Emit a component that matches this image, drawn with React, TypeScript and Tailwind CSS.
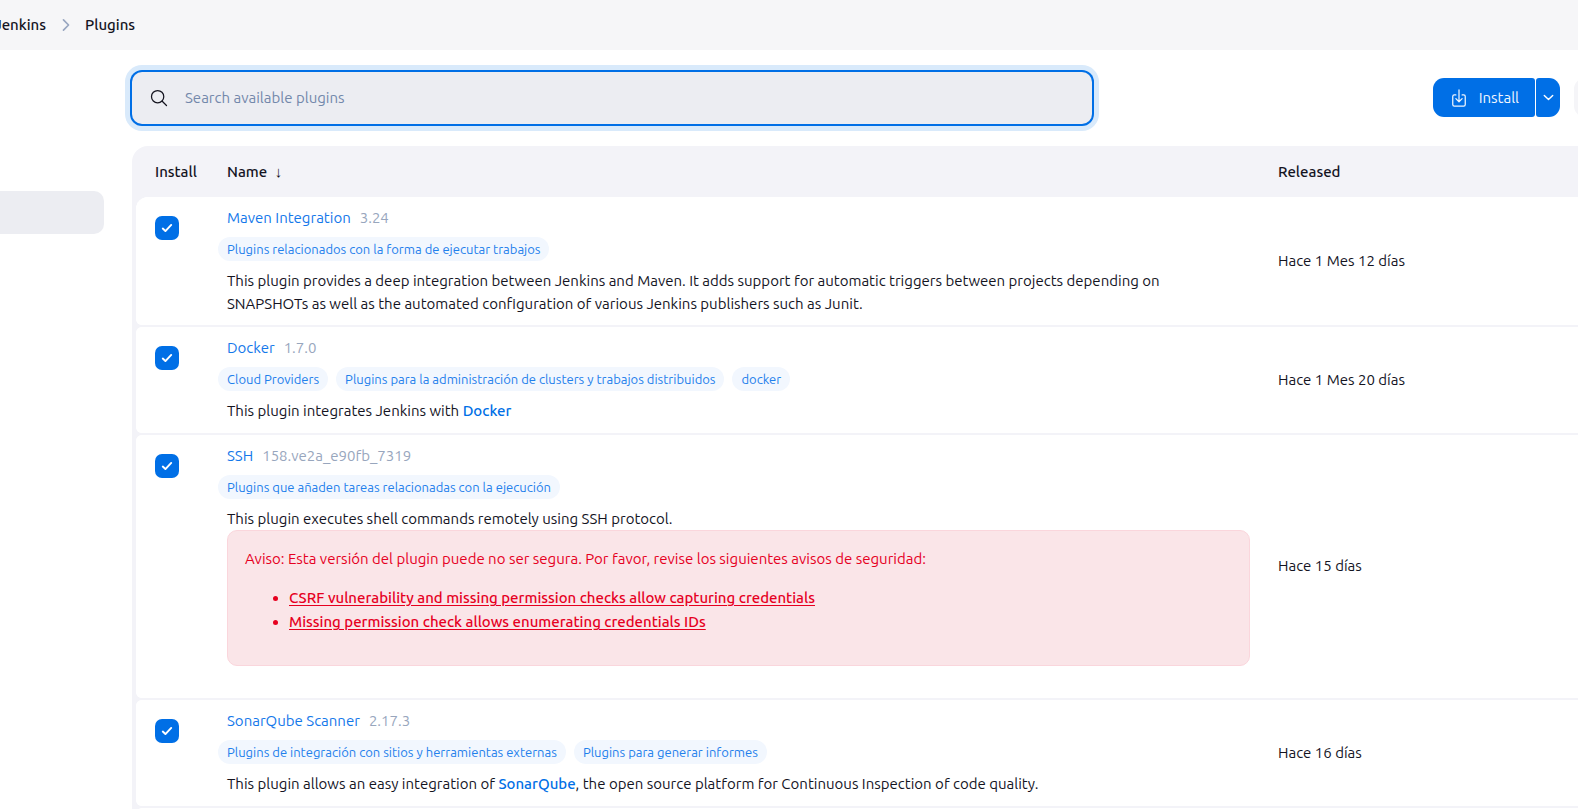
import type { ReactNode } from 'react';

type Plugin = {
  id: string;
  name: string;
  version: string;
  tags: string[];
  description: ReactNode;
  released: string;
  warnings?: string[];
};

const plugins: Plugin[] = [
  {
    id: 'maven-plugin',
    name: 'Maven Integration',
    version: '3.24',
    tags: ['Plugins relacionados con la forma de ejecutar trabajos'],
    description: (
      <>
        This plugin provides a deep integration between Jenkins and Maven. It adds support for automatic triggers
        between projects depending on
        <br />
        SNAPSHOTs as well as the automated configuration of various Jenkins publishers such as Junit.
      </>
    ),
    released: 'Hace 1 Mes 12 días',
  },
  {
    id: 'docker-plugin',
    name: 'Docker',
    version: '1.7.0',
    tags: ['Cloud Providers', 'Plugins para la administración de clusters y trabajos distribuidos', 'docker'],
    description: (
      <>
        This plugin integrates Jenkins with <DescriptionLink>Docker</DescriptionLink>
      </>
    ),
    released: 'Hace 1 Mes 20 días',
  },
  {
    id: 'ssh',
    name: 'SSH',
    version: '158.ve2a_e90fb_7319',
    tags: ['Plugins que añaden tareas relacionadas con la ejecución'],
    description: 'This plugin executes shell commands remotely using SSH protocol.',
    released: 'Hace 15 días',
    warnings: [
      'CSRF vulnerability and missing permission checks allow capturing credentials',
      'Missing permission check allows enumerating credentials IDs',
    ],
  },
  {
    id: 'sonar',
    name: 'SonarQube Scanner',
    version: '2.17.3',
    tags: ['Plugins de integración con sitios y herramientas externas', 'Plugins para generar informes'],
    description: (
      <>
        This plugin allows an easy integration of <DescriptionLink>SonarQube</DescriptionLink>, the open source
        platform for Continuous Inspection of code quality.
      </>
    ),
    released: 'Hace 16 días',
  },
];

function DescriptionLink({ children }: { children: ReactNode }) {
  return (
    <a href="#" className="font-medium text-[#006fe6]">
      {children}
    </a>
  );
}

function Icon({ className, width, children }: { className: string; width: number; children: ReactNode }) {
  return (
    <svg
      aria-hidden="true"
      viewBox="0 0 512 512"
      fill="none"
      stroke="currentColor"
      strokeWidth={width}
      strokeLinecap="round"
      strokeLinejoin="round"
      className={className}
    >
      {children}
    </svg>
  );
}

function SecurityWarning({ warnings }: { warnings: string[] }) {
  return (
    <div className="mb-[22px] rounded-[10px] border border-[#fad6dc] bg-[#fae5e8] px-[17px] pt-4 pb-[31px] text-[#e6001f]">
      <p>Aviso: Esta versión del plugin puede no ser segura. Por favor, revise los siguientes avisos de seguridad:</p>
      <ul className="mt-4 list-disc pl-11 leading-6">
        {warnings.map((warning) => (
          <li key={warning}>
            <a href="#" className="font-medium underline underline-offset-2">
              {warning}
            </a>
          </li>
        ))}
      </ul>
    </div>
  );
}

function PluginRow({ plugin, first }: { plugin: Plugin; first: boolean }) {
  return (
    <tr className="h-[106px] bg-white">
      <td className={first ? 'rounded-tl-xl rounded-bl-md bg-white align-top' : 'rounded-l-md bg-white align-top'}>
        <label className="mt-[19px] ml-[19px] grid size-6">
          <input
            type="checkbox"
            defaultChecked
            aria-label={plugin.name}
            className="peer col-start-1 row-start-1 size-6 appearance-none rounded-[7px] border-2 border-[#cfd3dc] checked:border-0 checked:bg-[#006fe6]"
          />
          <Icon
            width={82}
            className="pointer-events-none invisible col-start-1 row-start-1 size-3 place-self-center text-white peer-checked:visible"
          >
            <path d="M76 280l112 106L436 124" />
          </Icon>
        </label>
      </td>
      <td className="bg-white px-3.5 pt-[9px] pb-2.5 align-top">
        <div className="flex gap-[9px]">
          <a href="#" className="text-[#1478ea]">
            {plugin.name}
          </a>
          <span className="text-[#98a6bd]">{plugin.version}</span>
        </div>
        <div className="-ml-[9px] mt-2 flex gap-2">
          {plugin.tags.map((tag) => (
            <a key={tag} href="#" className="h-6 rounded-full bg-[#f2f7fe] px-[9px] text-[13px] leading-6 text-[#1f80ec]">
              {tag}
            </a>
          ))}
        </div>
        <div className="mt-2">{plugin.description}</div>
        {plugin.warnings && <SecurityWarning warnings={plugin.warnings} />}
      </td>
      <td className="bg-white px-3.5 pb-0.5 align-middle">{plugin.released}</td>
    </tr>
  );
}

export default function App() {
  return (
    <div className="h-screen overflow-hidden bg-white font-[Ubuntu,'Noto_Sans',sans-serif] text-[15px] leading-[23px] text-[#14141f]">
      <nav aria-label="Breadcrumb" className="flex h-[50px] items-center bg-[#f6f6f8] pb-px font-medium">
        <div className="flex w-[46px] justify-end overflow-hidden">
          <a href="#">Jenkins</a>
        </div>
        <Icon width={48} className="mr-2.5 ml-[11px] size-[18px] text-[#98a6c0]">
          <path d="M184 112l144 144-144 144" />
        </Icon>
        <a href="#">Plugins</a>
      </nav>

      <div className="flex">
        <aside className="w-[132px] shrink-0 pt-[141px]">
          <div className="mr-7 h-[43px] rounded-r-[10px] bg-[#ecedf2]" />
        </aside>

        <main className="min-w-0 grow pt-[22px]">
          <div className="flex items-center justify-between gap-8">
            <label className="flex h-[52px] w-full max-w-[960px] items-center rounded-[10px] bg-[#ecedf2] pl-[17px] shadow-[0_0_0_2px_#006fe6,0_0_0_7px_#d9eafb]">
              <Icon width={32} className="size-5 shrink-0 text-[#14141f]">
                <path d="M221.09 64a157.09 157.09 0 10157.09 157.09A157.1 157.1 0 00221.09 64z" />
                <path d="M338.29 338.29L448 448" />
              </Icon>
              <input
                type="search"
                aria-label="Search available plugins"
                placeholder="Search available plugins"
                className="h-full grow bg-transparent px-4 pb-0.5 outline-none placeholder:text-[#7388ab]"
              />
            </label>

            <div className="flex shrink-0 pb-px">
              <button
                type="button"
                className="flex h-[39px] items-center gap-2.5 rounded-l-[11px] rounded-r-[3px] bg-[#006fe6] px-4 text-[#f0f6fe]"
              >
                <Icon width={32} className="size-5">
                  <path d="M336 176h40a40 40 0 0140 40v208a40 40 0 01-40 40H136a40 40 0 01-40-40V216a40 40 0 0140-40h40" />
                  <path d="M176 272l80 80 80-80M256 48v288" />
                </Icon>
                Install
              </button>
              <button
                type="button"
                aria-label="More install options"
                className="ml-px flex h-[39px] w-6 items-center justify-center rounded-l-[3px] rounded-r-[11px] bg-[#006fe6] text-white"
              >
                <Icon width={48} className="size-[15px]">
                  <path d="M112 184l144 144 144-144" />
                </Icon>
              </button>
              <div className="ml-3.5 flex w-1 overflow-hidden">
                <button
                  type="button"
                  aria-label="Check now"
                  className="h-[39px] w-24 shrink-0 rounded-[11px] bg-[#f5f5f8]"
                />
              </div>
            </div>
          </div>

          <div className="mt-[22px] rounded-tl-2xl bg-[#f3f3f8] pl-1">
            <table className="w-full table-fixed border-separate border-spacing-x-0 border-spacing-y-[2px] text-left">
              <colgroup>
                <col className="w-[77px]" />
                <col />
                <col className="w-[314px]" />
              </colgroup>
              <thead>
                <tr className="h-[47px]">
                  <th className="pl-[19px] font-medium">Install</th>
                  <th className="px-3.5 font-medium">
                    Name <span className="ml-1">↓</span>
                  </th>
                  <th className="px-3.5 font-medium">Released</th>
                </tr>
              </thead>
              <tbody>
                {plugins.map((plugin, index) => (
                  <PluginRow key={plugin.id} plugin={plugin} first={index === 0} />
                ))}
                <tr className="h-[106px]">
                  <td className="rounded-l-md bg-white" />
                  <td className="bg-white" />
                  <td className="bg-white" />
                </tr>
              </tbody>
            </table>
          </div>
        </main>
      </div>
    </div>
  );
}
